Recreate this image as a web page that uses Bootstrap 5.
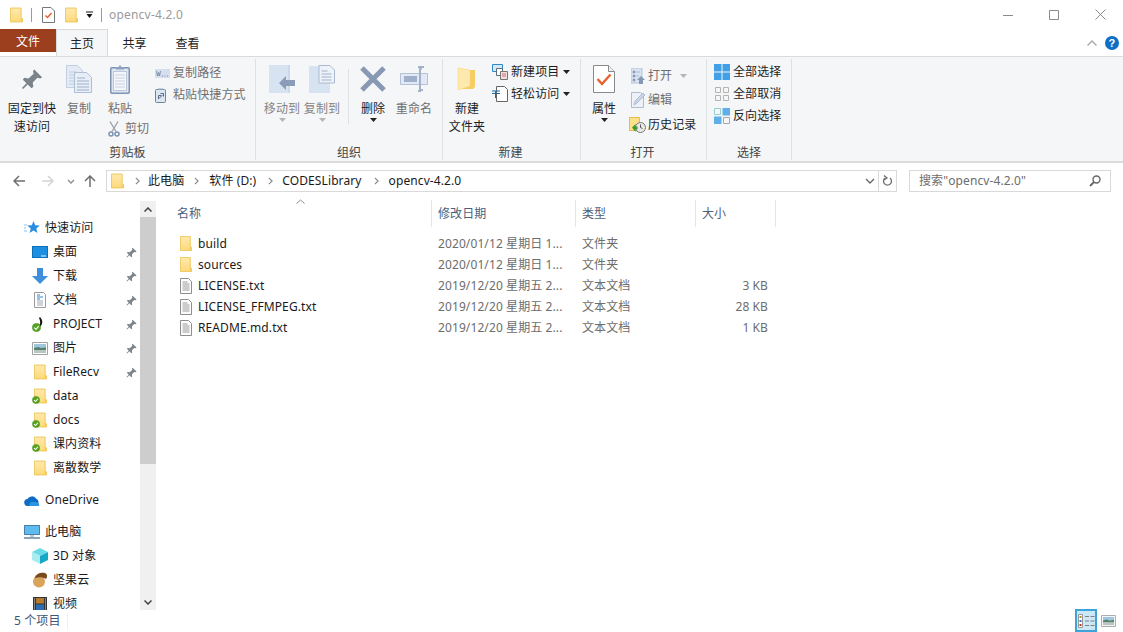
<!DOCTYPE html>
<html lang="zh"><head><meta charset="utf-8"><title>opencv-4.2.0</title>
<link href="https://cdn.jsdelivr.net/npm/bootstrap@5.3.0/dist/css/bootstrap.min.css" rel="stylesheet">
<style>
html,body{height:100%;margin:0;overflow:hidden;background:#fff}
body{font-family:"Noto Sans","Noto Sans CJK SC",sans-serif;font-size:12px;color:#1a1a1a;line-height:18px;width:1123px;height:632px;letter-spacing:.1px}
svg{display:block;flex:none}
.defs-holder{width:0;height:0;overflow:hidden}
.win{width:1123px;height:632px}
.titlebar{height:30px}
.tb-icons{padding-left:10px}
.tb-sep{width:1px;height:14px;background:#9a9a9a}
.tb-title{color:#9b9b9b;margin-left:7px;letter-spacing:.2px}
.winctl{width:46px;justify-content:center}
.tabstrip{height:27px}
.filetab{width:56px;height:23px;background:#9b3f1e;color:#fff;justify-content:center;margin-bottom:4px;padding-top:2px}
.hometab{width:52px;height:27px;justify-content:center;background:#f5f6f7;border:1px solid #dadbdc;border-bottom:0;color:#222;padding-top:2px}
.plaintab{width:53px;justify-content:center;color:#222;padding-top:2px}
.ribbon{height:107px;background:#f5f6f7;border-top:1px solid #dadbdc;border-bottom:2px solid #dadbdc}
.rgroup{border-right:1px solid #dfe0e2;margin-top:2px;margin-bottom:1px;height:101px}
.g1{width:256px;padding-left:4px}.g2{width:187px;padding-left:6px}.g3{width:138px;padding-left:4px}.g4{width:126px;padding-left:5px}.g5{width:85px;padding-left:7px}
.rbody{height:85px;margin-top:2px}
.rlabel{text-align:center;color:#444;height:16px;line-height:18px}
.g1 .rlabel{margin-left:-4px}.g2 .rlabel{margin-left:-6px}.g3 .rlabel{margin-left:-6px}.g4 .rlabel{margin-left:-7px}.g5 .rlabel{margin-left:-7px}
.bigbtn{flex-direction:column;align-items:center;text-align:center;flex:none}
.ico-slot{height:36px;justify-content:center;align-items:center;margin-bottom:3px}
.w56{width:56px}.w38{width:38px}.w44{width:44px}.w40{width:40px}.w36{width:36px}
.dim{color:#6f6f6f}.dimmer{color:#858585}.ink{color:#1d1d1d}
.cutrow{margin-left:10px;margin-top:2px;white-space:nowrap;gap:5px;align-self:flex-start}
.smallcol{flex-direction:column;flex:none}
.smallrow{height:22px;align-items:center;white-space:nowrap}
.tall{height:24.5px}
.vsep{width:1px;height:55px;background:#dfe0e2;margin:8px 4px 0 6px}
.addr{height:34px;padding-top:7px}
.navbtns{width:106px;height:22px}
.addrbox{width:773px;height:22px;border:1px solid #d9d9d9;flex:none}
.refresh{width:19px;height:22px;border:1px solid #d9d9d9;flex:none;justify-content:center;align-items:center;margin-left:-1px}
.searchbox{width:202px;height:22px;border:1px solid #d9d9d9;margin-left:12px;padding:0 9px;color:#6d6d6d;justify-content:space-between;align-items:center}
.crumb{white-space:nowrap}
.mainarea{height:413px}
.navpane{width:140px;flex:none;height:413px;overflow:hidden}
.navrow{height:24px;align-items:center;white-space:nowrap;position:relative}
.navhead{padding-left:24px;gap:5px}
.navkid{padding-left:32px;gap:5px}
.navlast{height:19px;align-items:flex-start;padding-top:4px}
.navlast span{line-height:12px;padding-top:2px}
.navpin{position:absolute;left:125.500px;top:6.500px}
.gapnav{margin-top:8px}
.scrolly{width:16px;flex:none;background:#f0f0f0;height:409px;margin-top:4px}
.sbtn{height:16px;justify-content:center;align-items:center}
.sthumb{height:247px;background:#cdcdcd}
.strack{flex:1}
.listpane{padding-left:9px;min-width:0}
.lhead{height:30px;color:#4c607a;position:relative}
.cn{width:267px;padding-left:12px}
.cd{width:144px;padding-left:6px}
.ct{width:120px;padding-left:6px}
.cs{width:80px;padding-left:6px;padding-right:8px}
.cellh{border-right:1px solid #e5e5e5;height:27px;margin-top:3px;line-height:27px}
.sortmark{position:absolute;left:131px;top:2px}
.lrow{height:21px;align-items:center;white-space:nowrap}
.lrow .cn{padding-left:15px;gap:6px;display:flex;align-items:center}
.lrow .cd,.lrow .ct,.lrow .cs{color:#6d6d6d}
.lrow .cs{text-align:right}
.listrows{padding-top:6px}
.statusbar{height:22px;color:#3e5671;padding-left:14px}
.st-sep{width:1px;height:16px;background:#efefef;margin-left:7px}
.viewsel{width:22px;height:23px;margin-top:-1px;background:#cce8f7;border:2px solid #3ea3da;justify-content:center;align-items:center}
.viewplain{width:22px;height:22px;justify-content:center;align-items:center;margin-right:4px}
</style></head><body>
<svg class="defs-holder" xmlns="http://www.w3.org/2000/svg"><defs>
<linearGradient id="fy" x1="0" y1="0" x2="0" y2="1"><stop offset="0" stop-color="#ffe9ae"/><stop offset="1" stop-color="#fdd97a"/></linearGradient>
<symbol id="folder" viewBox="0 0 14 16"><path d="M.5.500h11.500v11.500h1.500v3.500H.5z" fill="url(#fy)" stroke="#edc658"/><path d="M12 12v3.500" stroke="#edc658"/></symbol>
<symbol id="chk" viewBox="0 0 10 10"><circle cx="5" cy="5" r="4.500" fill="#55a51f" stroke="#3f8a17" stroke-width=".6"/><path d="M2.500 5.200 4.400 7l3-3.600" fill="none" stroke="#fff" stroke-width="1.300"/></symbol>
<symbol id="pin" viewBox="0 0 24 24"><path d="M14.500 1.500 23 10l-2 1.500-3-.8-5.200 5.200.7 4.600-2 1.600L7.300 18l-5 5-1.300-1.300 5-5-4-4 1.600-2 4.600.7L13.800 6.200l-.8-3z" fill="#7c848b"/></symbol>
<symbol id="txt" viewBox="0 0 12 16"><path d="M.5.500h8l3 3v12H.5z" fill="#fdfdfd" stroke="#8d8d8d"/><path d="M2.500 4h5M2.500 6h7M2.500 8h7M2.500 10h7M2.500 12h7" stroke="#9a9a9a"/></symbol>
<symbol id="chev" viewBox="0 0 6 10"><path d="M1 1l4 4-4 4" fill="none" stroke="#8a8a8a" stroke-width="1.500"/></symbol>
<symbol id="film" viewBox="0 0 16 16"><path d="M1 1h14v14H1z" fill="#333"/><path d="M4 2h8v5.500H4z" fill="#b87b2a"/><path d="M4 8.500h8V14H4z" fill="#2a6fb5"/><path d="M2 3h1M2 5h1M2 7h1M2 9h1M2 11h1M2 13h1M13 3h1M13 5h1M13 7h1M13 9h1M13 11h1M13 13h1" stroke="#ddd"/></symbol>
<symbol id="photo" viewBox="0 0 16 13"><path d="M.5.500h15v12H.5z" fill="#fff" stroke="#a2a2a2"/><path d="M2 2h12v4H2z" fill="#9fc6dc"/><path d="M2 6l4-1 3 1 5-.5V8H2z" fill="#55806c"/><path d="M2 8h12v3H2z" fill="#b9c5c2"/></symbol>
</defs></svg>
<div class="win d-flex flex-column">

<div class="titlebar d-flex align-items-center">
  <div class="tb-icons d-flex align-items-center">
    <svg width="13" height="16"><use href="#folder"/></svg>
    <div class="tb-sep" style="margin-left:8px"></div>
    <svg style="margin-left:10px" width="13" height="16" viewBox="0 0 13 16"><path d="M.5.500h8.500l3.500 3.500v11.500H.5z" fill="#fff" stroke="#777"/><path d="M3.500 8.500l2 2 4-4.500" fill="none" stroke="#e8612c" stroke-width="1.500"/></svg>
    <svg style="margin-left:10px" width="13" height="16"><use href="#folder"/></svg>
    <svg style="margin-left:8px" width="8" height="8" viewBox="0 0 8 8"><path d="M0 1h7" stroke="#111"/><path d="M.5 3h6L3.500 7z" fill="#111"/></svg>
    <div class="tb-sep" style="margin-left:7px"></div>
  </div>
  <div class="tb-title flex-grow-1">opencv-4.2.0</div>
  <div class="winctl d-flex"><svg width="10" height="10" viewBox="0 0 10 10"><path d="M0 5.500h10" stroke="#8a8a8a"/></svg></div>
  <div class="winctl d-flex"><svg width="10" height="10" viewBox="0 0 10 10"><path d="M.5.500h9v9h-9z" fill="none" stroke="#8a8a8a"/></svg></div>
  <div class="winctl d-flex"><svg width="11" height="11" viewBox="0 0 11 11"><path d="M.5.500l10 10M10.500.500l-10 10" stroke="#8a8a8a"/></svg></div>
</div>

<div class="tabstrip d-flex align-items-start">
  <div class="filetab d-flex align-items-center">文件</div>
  <div class="hometab d-flex align-items-center">主页</div>
  <div class="plaintab d-flex align-items-center" style="height:27px">共享</div>
  <div class="plaintab d-flex align-items-center" style="height:27px">查看</div>
  <div class="ms-auto d-flex align-items-center gap-2" style="height:27px;padding-right:4px;padding-top:1px">
    <svg width="10" height="6" viewBox="0 0 10 6"><path d="M.5 5.500l4.500-4.500 4.500 4.500" fill="none" stroke="#a8a8a8" stroke-width="1.300"/></svg>
    <svg width="14" height="14" viewBox="0 0 14 14"><circle cx="7" cy="7" r="7" fill="#0e6fc4"/><text x="7" y="11" font-size="11" font-weight="700" text-anchor="middle" fill="#fff" font-family="Liberation Sans">?</text></svg>
  </div>
</div>

<div class="ribbon d-flex">
  <div class="rgroup g1 d-flex flex-column">
    <div class="rbody d-flex">
      <div class="bigbtn w56 d-flex ink"><div class="ico-slot d-flex"><svg width="22" height="22"><use href="#pin"/></svg></div>固定到快<br>速访问</div>
      <div class="bigbtn w38 d-flex dim"><div class="ico-slot d-flex"><svg width="26" height="28" viewBox="0 0 26 28"><path d="M.5.500h11l5 5v17H.5z" fill="#e4ebf5" stroke="#c2cfe2"/><path d="M3 7h8M3 10h11M3 13h11M3 16h11M3 19h11" stroke="#c0cce0"/><path d="M8.500 7.500h12l5 5v15h-17z" fill="#e8eef7" stroke="#aebfd8"/><path d="M11 13h8M11 16h12M11 19h12M11 22h12M11 25h12" stroke="#9fb0c9"/></svg></div>复制</div>
      <div class="bigbtn w44 d-flex dim"><div class="ico-slot d-flex"><svg width="20" height="30" viewBox="0 0 20 30"><rect x=".75" y="3.750" width="18.500" height="25.500" rx="1" fill="#dde5f0" stroke="#7f93b3" stroke-width="1.500"/><path d="M3.500 7.500h13v19h-13z" fill="#f4f6fa" stroke="#bcc8da"/><path d="M5 11h10M5 14h10M5 17h10M5 20h10M5 23h10" stroke="#c6d2e3"/><path d="M6 5V3h2.500l1.500-2 1.500 2H14v2.500H6z" fill="#8fa2bf"/></svg></div>粘贴
        <div class="cutrow d-flex align-items-center"><svg width="12" height="16" viewBox="0 0 12 16"><path d="M2 .500l6 10M10 .500l-6 10" stroke="#9a9fa7" stroke-width="1.300"/><circle cx="3" cy="13" r="2" fill="none" stroke="#7b93b4" stroke-width="1.500"/><circle cx="9" cy="13" r="2" fill="none" stroke="#7b93b4" stroke-width="1.500"/></svg><span>剪切</span></div>
      </div>
      <div class="smallcol d-flex dim" style="margin-left:13px;padding-top:1px">
        <div class="smallrow d-flex" style="gap:3px"><svg width="15" height="9" viewBox="0 0 15 9"><path d="M0 0h15v9H0z" fill="#d4deee"/><path d="M1.500 2l1 5 1-3.500 1 3.500 1-5M7 7h1M9.500 7h1M12 7h1" fill="none" stroke="#6e7f99" stroke-width=".8"/></svg><span>复制路径</span></div>
        <div class="smallrow d-flex" style="gap:7px"><svg width="11" height="15" viewBox="0 0 11 15"><rect x=".5" y="1.500" width="10" height="13" rx="1" fill="#dde5f0" stroke="#71859f"/><path d="M3 2V.5h5V2" fill="#8fa2bf"/><path d="M3.500 11V7.500h2.500M4 10.500L7.500 7M5.500 5.500h3v3" fill="none" stroke="#566a85"/></svg><span>粘贴快捷方式</span></div>
      </div>
    </div>
    <div class="rlabel">剪贴板</div>
  </div>
  <div class="rgroup g2 d-flex flex-column">
    <div class="rbody d-flex">
      <div class="bigbtn w40 d-flex dimmer"><div class="ico-slot d-flex"><svg width="26" height="28" viewBox="0 0 26 28"><path d="M0 0h21v28H0z" fill="#d8e3f2"/><path d="M20 0v28" stroke="#bccde4"/><path d="M10 18l7-7v4h9v6h-9v4z" fill="#8a9cb8"/></svg></div>移动到<svg width="7" height="4" viewBox="0 0 7 4"><path d="M0 0h7L3.500 4z" fill="#b5b5b5"/></svg></div>
      <div class="bigbtn w40 d-flex dimmer"><div class="ico-slot d-flex"><svg width="26" height="28" viewBox="0 0 26 28"><path d="M0 1h21v27H0z" fill="#d8e3f2"/><path d="M10 .5h11l4.500 4.500v13H10z" fill="#eef3f9" stroke="#aab9cf"/><path d="M12.500 6h6M12.500 9h10M12.500 12h10M12.500 15h10" stroke="#9fb0c9"/></svg></div>复制到<svg width="7" height="4" viewBox="0 0 7 4"><path d="M0 0h7L3.500 4z" fill="#b5b5b5"/></svg></div>
      <div class="vsep"></div>
      <div class="bigbtn w40 d-flex ink"><div class="ico-slot d-flex"><svg width="26" height="26" viewBox="0 0 26 26"><path d="M2 2l22 22M24 2L2 24" stroke="#8a99b3" stroke-width="5"/></svg></div>删除<svg width="7" height="4" viewBox="0 0 7 4"><path d="M0 0h7L3.500 4z" fill="#222"/></svg></div>
      <div class="bigbtn w40 d-flex dim" style="margin-left:1px"><div class="ico-slot d-flex"><svg width="28" height="26" viewBox="0 0 28 26"><path d="M.5 7.500h27v11H.5z" fill="#e2e9f4" stroke="#b4c2d8"/><path d="M4 10h13v6H4z" fill="#9eb0ca"/><path d="M18 1h3v1.500h-1V24H23M24 1h-3M18 25h3" fill="none" stroke="#a3b2c9" stroke-width="2"/></svg></div>重命名</div>
    </div>
    <div class="rlabel">组织</div>
  </div>
  <div class="rgroup g3 d-flex flex-column">
    <div class="rbody d-flex">
      <div class="bigbtn w40 d-flex ink"><div class="ico-slot d-flex"><svg width="20" height="24" viewBox="0 0 20 24"><path d="M1 1l12 2v17l-12 3z" fill="#fbe7a8"/><path d="M13 3h5v17l-2 2H3l10-3z" fill="#f6cd62"/><path d="M1 1l12 2v16L1 23z" fill="#fde9ad" stroke="#f5d777" stroke-width=".5"/></svg></div>新建<br>文件夹</div>
      <div class="smallcol d-flex ink" style="margin-left:5px">
        <div class="smallrow d-flex"><svg width="16" height="16" viewBox="0 0 16 16"><path d="M.5.500h10v7h-10z" fill="#d6e8f6" stroke="#2f89c6"/><path d="M4.500 4.500h6v7h-6z" fill="#fff" stroke="#5e6d7b"/><path d="M8.500 7.500h7v8h-7z" fill="#f5dede" stroke="#777"/><path d="M10 10h4M10 12h4" stroke="#c77"/></svg><span style="margin-left:3px">新建项目</span><svg style="margin-left:4px" width="7" height="4" viewBox="0 0 7 4"><path d="M0 0h7L3.500 4z" fill="#222"/></svg></div>
        <div class="smallrow d-flex"><svg width="16" height="16" viewBox="0 0 16 16"><path d="M4.500.500h8l3 3v12h-11z" fill="#fff" stroke="#666"/><path d="M0 5h8M0 7.500h8" stroke="#1c6ca8"/><path d="M3.500 5v7" stroke="#1c6ca8"/></svg><span style="margin-left:3px">轻松访问</span><svg style="margin-left:4px" width="7" height="4" viewBox="0 0 7 4"><path d="M0 0h7L3.500 4z" fill="#222"/></svg></div>
      </div>
    </div>
    <div class="rlabel">新建</div>
  </div>
  <div class="rgroup g4 d-flex flex-column">
    <div class="rbody d-flex">
      <div class="bigbtn w36 d-flex ink"><div class="ico-slot d-flex"><svg width="22" height="28" viewBox="0 0 22 28"><path d="M.5.500h15l6 6v21H.5z" fill="#fff" stroke="#8a8a8a"/><path d="M15.500.5v6h6" fill="#eee" stroke="#8a8a8a"/><path d="M4.500 14l4.500 5 8.500-9.500" fill="none" stroke="#e9612b" stroke-width="2.500"/></svg></div>属性<svg width="7" height="4" viewBox="0 0 7 4"><path d="M0 0h7L3.500 4z" fill="#222"/></svg></div>
      <div class="smallcol d-flex dim" style="margin-left:9px;padding-top:2px">
        <div class="smallrow tall d-flex" style="gap:3px"><svg width="14" height="16" viewBox="0 0 14 16"><path d="M0 0h11v15H0z" fill="#d8e2f0" stroke="#b5c3d8"/><path d="M2 3h2v2H2zM2 7h2v2H2zM2 11h2v2H2zM5 4h4M5 8h3" fill="#8a9bb5" stroke="#8a9bb5" stroke-width=".5"/><path d="M6 12l4-4 4 4h-2v4H8v-4z" fill="#8497b3"/></svg><span>打开</span><svg style="margin-left:5px" width="7" height="4" viewBox="0 0 7 4"><path d="M0 0h7L3.500 4z" fill="#b5b5b5"/></svg></div>
        <div class="smallrow tall d-flex" style="gap:3px"><svg width="14" height="16" viewBox="0 0 14 16"><path d="M.5.500h9l3 3v12H.5z" fill="#eef2f8" stroke="#aebcd0"/><path d="M3 13l1-4 8-8 2 2-8 8z" fill="#c9d5e6" stroke="#9fb0c9" stroke-width=".7"/></svg><span>编辑</span></div>
        <div class="smallrow tall d-flex ink" style="margin-left:-2px;gap:2px"><svg width="17" height="16" viewBox="0 0 17 16"><path d="M.5.500h10v13H.5z" fill="#fde08a" stroke="#e8bd45"/><circle cx="11.500" cy="10.500" r="5" fill="#e9e9e9" stroke="#777"/><path d="M11.500 7.500v3l2 1" stroke="#555" fill="none"/><path d="M3 10.500L6.500 7v2.500h2v3h-2V15z" fill="#3e9a2a"/></svg><span>历史记录</span></div>
      </div>
    </div>
    <div class="rlabel">打开</div>
  </div>
  <div class="rgroup g5 d-flex flex-column">
    <div class="rbody d-flex">
      <div class="smallcol d-flex ink">
        <div class="smallrow d-flex" style="gap:3px"><svg width="16" height="16" viewBox="0 0 16 16"><path d="M0 0h7.500v7.500H0zM8.500 0H16v7.500H8.500zM0 8.500h7.500V16H0zM8.500 8.500H16V16H8.500z" fill="#42a1e6"/></svg><span>全部选择</span></div>
        <div class="smallrow d-flex" style="gap:3px"><svg width="16" height="16" viewBox="0 0 16 16"><path d="M1.500 1.500h5v5h-5zM9.500 1.500h5v5h-5zM1.500 9.500h5v5h-5zM9.500 9.500h5v5h-5z" fill="none" stroke="#b4b4b4"/></svg><span>全部取消</span></div>
        <div class="smallrow d-flex" style="gap:3px"><svg width="16" height="16" viewBox="0 0 16 16"><path d="M.5.500h6v6h-6z" fill="none" stroke="#9cc" /><path d="M8.500 0H16v7.500H8.500zM0 8.500h7.500V16H0z" fill="#5fb0ea"/><path d="M9.500 9.500h6v6h-6z" fill="none" stroke="#a9a9a9"/></svg><span>反向选择</span></div>
      </div>
    </div>
    <div class="rlabel">选择</div>
  </div>
</div>

<div class="addr d-flex">
  <div class="navbtns d-flex align-items-center" style="padding-left:13px">
    <svg width="12" height="12" viewBox="0 0 12 12"><path d="M6 1L1 6l5 5M1 6h11" fill="none" stroke="#6f6f6f" stroke-width="1.500"/></svg>
    <svg style="margin-left:17px" width="12" height="12" viewBox="0 0 12 12"><path d="M6 1l5 5-5 5M11 6H0" fill="none" stroke="#d4d4d4" stroke-width="1.500"/></svg>
    <svg style="margin-left:13px" width="8" height="5" viewBox="0 0 8 5"><path d="M1 1l3 3 3-3" fill="none" stroke="#8a8a8a" stroke-width="1.300"/></svg>
    <svg style="margin-left:9px" width="12" height="12" viewBox="0 0 12 12"><path d="M1 6l5-5 5 5M6 1v11" fill="none" stroke="#6f6f6f" stroke-width="1.500"/></svg>
  </div>
  <div class="addrbox d-flex align-items-center">
    <svg style="margin-left:4px" width="13" height="16"><use href="#folder"/></svg>
    <svg style="margin-left:11px" width="5" height="8"><use href="#chev"/></svg>
    <span class="crumb" style="margin-left:8px">此电脑</span>
    <svg style="margin-left:10px" width="5" height="8"><use href="#chev"/></svg>
    <span class="crumb" style="margin-left:10px">软件 (D:)</span>
    <svg style="margin-left:12px" width="5" height="8"><use href="#chev"/></svg>
    <span class="crumb" style="margin-left:9px">CODESLibrary</span>
    <svg style="margin-left:12px" width="5" height="8"><use href="#chev"/></svg>
    <span class="crumb" style="margin-left:10px">opencv-4.2.0</span>
    <svg class="ms-auto" style="margin-right:3px" width="10" height="6" viewBox="0 0 10 6"><path d="M1 1l4 4 4-4" fill="none" stroke="#666" stroke-width="1.300"/></svg>
  </div>
  <div class="refresh d-flex"><svg width="11" height="12" viewBox="0 0 11 12"><path d="M3 3a4 4 0 1 0 5 0M2 .5L5 3 2 5" fill="none" stroke="#6f6f6f" stroke-width="1.300"/></svg></div>
  <div class="searchbox d-flex"><span>搜索"opencv-4.2.0"</span><svg width="12" height="12" viewBox="0 0 12 12"><circle cx="7.500" cy="4.500" r="3.500" fill="none" stroke="#666" stroke-width="1.400"/><path d="M5 7L1 11" stroke="#666" stroke-width="1.800"/></svg></div>
</div>

<div class="mainarea d-flex">
  <div class="navpane">
    <div class="navrow navhead d-flex" style="margin-top:19px"><svg width="16" height="16" viewBox="0 0 16 16"><path d="M9.500 1l1.700 4.300 4.600.3-3.500 3 1.100 4.500-3.900-2.500-3.900 2.500 1.100-4.500-3.500-3 4.600-.3z" fill="#2b8de0"/><path d="M0 5h3M0 8h2M0 11h3" stroke="#8cc3ee"/></svg><span>快速访问</span></div>
    <div class="navrow navkid d-flex"><svg width="16" height="14" viewBox="0 0 16 14"><path d="M0 1h16v12H0z" fill="#1d8fe1"/><path d="M.5 1.500h15v11H.5z" fill="none" stroke="#0f6fb6"/><path d="M9 11h5" stroke="#e6f3fc"/></svg><span>桌面</span><svg class="navpin" width="11" height="11"><use href="#pin"/></svg></div>
    <div class="navrow navkid d-flex"><svg width="16" height="16" viewBox="0 0 16 16"><path d="M5 0h6v8h5l-8 8-8-8h5z" fill="#3f8fdc"/></svg><span>下载</span><svg class="navpin" width="11" height="11"><use href="#pin"/></svg></div>
    <div class="navrow navkid d-flex"><svg width="16" height="16" viewBox="0 0 16 16"><path d="M2.500.500h9l2 2v13h-11z" fill="#fff" stroke="#9a9a9a"/><path d="M5 3h3M5 5h6M5 7h3" stroke="#2f86cf"/><path d="M5 9h6M5 11h6M5 13h6" stroke="#9aa8b5"/></svg><span>文档</span><svg class="navpin" width="11" height="11"><use href="#pin"/></svg></div>
    <div class="navrow navkid d-flex"><svg width="16" height="16" viewBox="0 0 16 16"><path d="M8 1c3 3 3 7 0 10-1 1-3 1-4 1 2-1 3-2 4-4 .5-2 0-4-1-6z" fill="#141414"/><use href="#chk" x="0" y="7" width="9" height="9"/></svg><span>PROJECT</span><svg class="navpin" width="11" height="11"><use href="#pin"/></svg></div>
    <div class="navrow navkid d-flex"><svg width="16" height="13"><use href="#photo"/></svg><span>图片</span><svg class="navpin" width="11" height="11"><use href="#pin"/></svg></div>
    <div class="navrow navkid d-flex"><svg width="16" height="16" viewBox="0 0 16 16"><use href="#folder" x="2" y="0" width="13" height="16"/></svg><span>FileRecv</span><svg class="navpin" width="11" height="11"><use href="#pin"/></svg></div>
    <div class="navrow navkid d-flex"><svg width="16" height="16" viewBox="0 0 16 16"><use href="#folder" x="2" y="0" width="13" height="16"/><use href="#chk" x="0" y="8" width="8" height="8"/></svg><span>data</span></div>
    <div class="navrow navkid d-flex"><svg width="16" height="16" viewBox="0 0 16 16"><use href="#folder" x="2" y="0" width="13" height="16"/><use href="#chk" x="0" y="8" width="8" height="8"/></svg><span>docs</span></div>
    <div class="navrow navkid d-flex"><svg width="16" height="16" viewBox="0 0 16 16"><use href="#folder" x="2" y="0" width="13" height="16"/><use href="#chk" x="0" y="8" width="8" height="8"/></svg><span>课内资料</span></div>
    <div class="navrow navkid d-flex"><svg width="16" height="16" viewBox="0 0 16 16"><use href="#folder" x="2" y="0" width="13" height="16"/></svg><span>离散数学</span></div>
    <div class="navrow navhead d-flex gapnav"><svg width="16" height="11" viewBox="0 0 16 11"><path d="M4 11a3.500 3.500 0 0 1-.5-7A5 5 0 0 1 12 3.500 4 4 0 0 1 12 11z" fill="#0f6cc4"/><path d="M5 11c0-4 3-5 6-4 3 0 5 2 4 4z" fill="#2b93e4"/></svg><span>OneDrive</span></div>
    <div class="navrow navhead d-flex gapnav"><svg width="16" height="15" viewBox="0 0 16 15"><path d="M0 0h16v10H0z" fill="#5dbbf0"/><path d="M.5.500h15v9H.5z" fill="none" stroke="#4a7ea6"/><path d="M0 13h16" stroke="#8ea3b6" stroke-width="2"/><path d="M6 10h4v2H6z" fill="#b8c6d2"/></svg><span>此电脑</span></div>
    <div class="navrow navkid d-flex"><svg width="16" height="16" viewBox="0 0 16 16"><path d="M8 0l8 4-8 4-8-4z" fill="#69dbe6"/><path d="M0 4l8 4v8l-8-4z" fill="#a8ecef"/><path d="M16 4l-8 4v8l8-4z" fill="#15a8c6"/></svg><span>3D 对象</span></div>
    <div class="navrow navkid d-flex"><svg width="16" height="16" viewBox="0 0 16 16"><circle cx="7" cy="9.500" r="6" fill="#d9a45a"/><path d="M3 6c0-4 6-6 10-5 2 1 3 3 1 6-3-2-7-2-11-1z" fill="#7a4a1e"/></svg><span>坚果云</span></div>
    <div class="navrow navkid navlast d-flex"><svg width="16" height="16"><use href="#film"/></svg><span>视频</span></div>
  </div>
  <div class="scrolly d-flex flex-column">
    <div class="sbtn d-flex"><svg width="8" height="5" viewBox="0 0 8 5"><path d="M.5 4.500L4 1l3.500 3.500" fill="none" stroke="#444" stroke-width="1.500"/></svg></div>
    <div class="sthumb"></div>
    <div class="strack"></div>
    <div class="sbtn d-flex"><svg width="8" height="5" viewBox="0 0 8 5"><path d="M.5.500L4 4 7.500.5" fill="none" stroke="#444" stroke-width="1.500"/></svg></div>
  </div>
  <div class="listpane flex-grow-1">
    <div class="lhead d-flex">
      <div class="cn cellh">名称</div>
      <div class="cd cellh">修改日期</div>
      <div class="ct cellh">类型</div>
      <div class="cs cellh">大小</div>
      <svg class="sortmark" width="9" height="5" viewBox="0 0 9 5"><path d="M.5 4.500L4.500 1l4 3.500" fill="none" stroke="#8a8a8a"/></svg>
    </div>
    <div class="listrows">
      <div class="lrow d-flex"><div class="cn"><svg width="12" height="15" viewBox="0 0 14 16" preserveAspectRatio="none"><use href="#folder"/></svg><span>build</span></div><div class="cd">2020/01/12 星期日 1...</div><div class="ct">文件夹</div><div class="cs"></div></div>
      <div class="lrow d-flex"><div class="cn"><svg width="12" height="15" viewBox="0 0 14 16" preserveAspectRatio="none"><use href="#folder"/></svg><span>sources</span></div><div class="cd">2020/01/12 星期日 1...</div><div class="ct">文件夹</div><div class="cs"></div></div>
      <div class="lrow d-flex"><div class="cn"><svg width="12" height="16"><use href="#txt"/></svg><span>LICENSE.txt</span></div><div class="cd">2019/12/20 星期五 2...</div><div class="ct">文本文档</div><div class="cs">3 KB</div></div>
      <div class="lrow d-flex"><div class="cn"><svg width="12" height="16"><use href="#txt"/></svg><span>LICENSE_FFMPEG.txt</span></div><div class="cd">2019/12/20 星期五 2...</div><div class="ct">文本文档</div><div class="cs">28 KB</div></div>
      <div class="lrow d-flex"><div class="cn"><svg width="12" height="16"><use href="#txt"/></svg><span>README.md.txt</span></div><div class="cd">2019/12/20 星期五 2...</div><div class="ct">文本文档</div><div class="cs">1 KB</div></div>
    </div>
  </div>
</div>

<div class="statusbar d-flex align-items-center">
  <span>5 个项目</span><div class="st-sep"></div>
  <div class="viewsel d-flex ms-auto"><svg width="17" height="14" viewBox="0 0 17 14"><path d="M.5.500h4v13h-4z" fill="#fff" stroke="#9a9a9a"/><path d="M1.500 2h2v2h-2z" fill="#b58a3a"/><path d="M1.500 6h2v2h-2z" fill="#3b78c4"/><path d="M1.500 10h2v2h-2z" fill="#c0392b"/><path d="M7 2.500h4M12.500 2.500h4M7 7h4M12.500 7h4M7 11.500h4M12.500 11.500h4" stroke="#808080"/></svg></div>
  <div class="viewplain d-flex"><svg width="15" height="12" viewBox="0 0 16 13"><use href="#photo"/></svg></div>
</div>
</div>
<script src="https://cdn.jsdelivr.net/npm/bootstrap@5.3.0/dist/js/bootstrap.bundle.min.js"></script>
</body></html>
